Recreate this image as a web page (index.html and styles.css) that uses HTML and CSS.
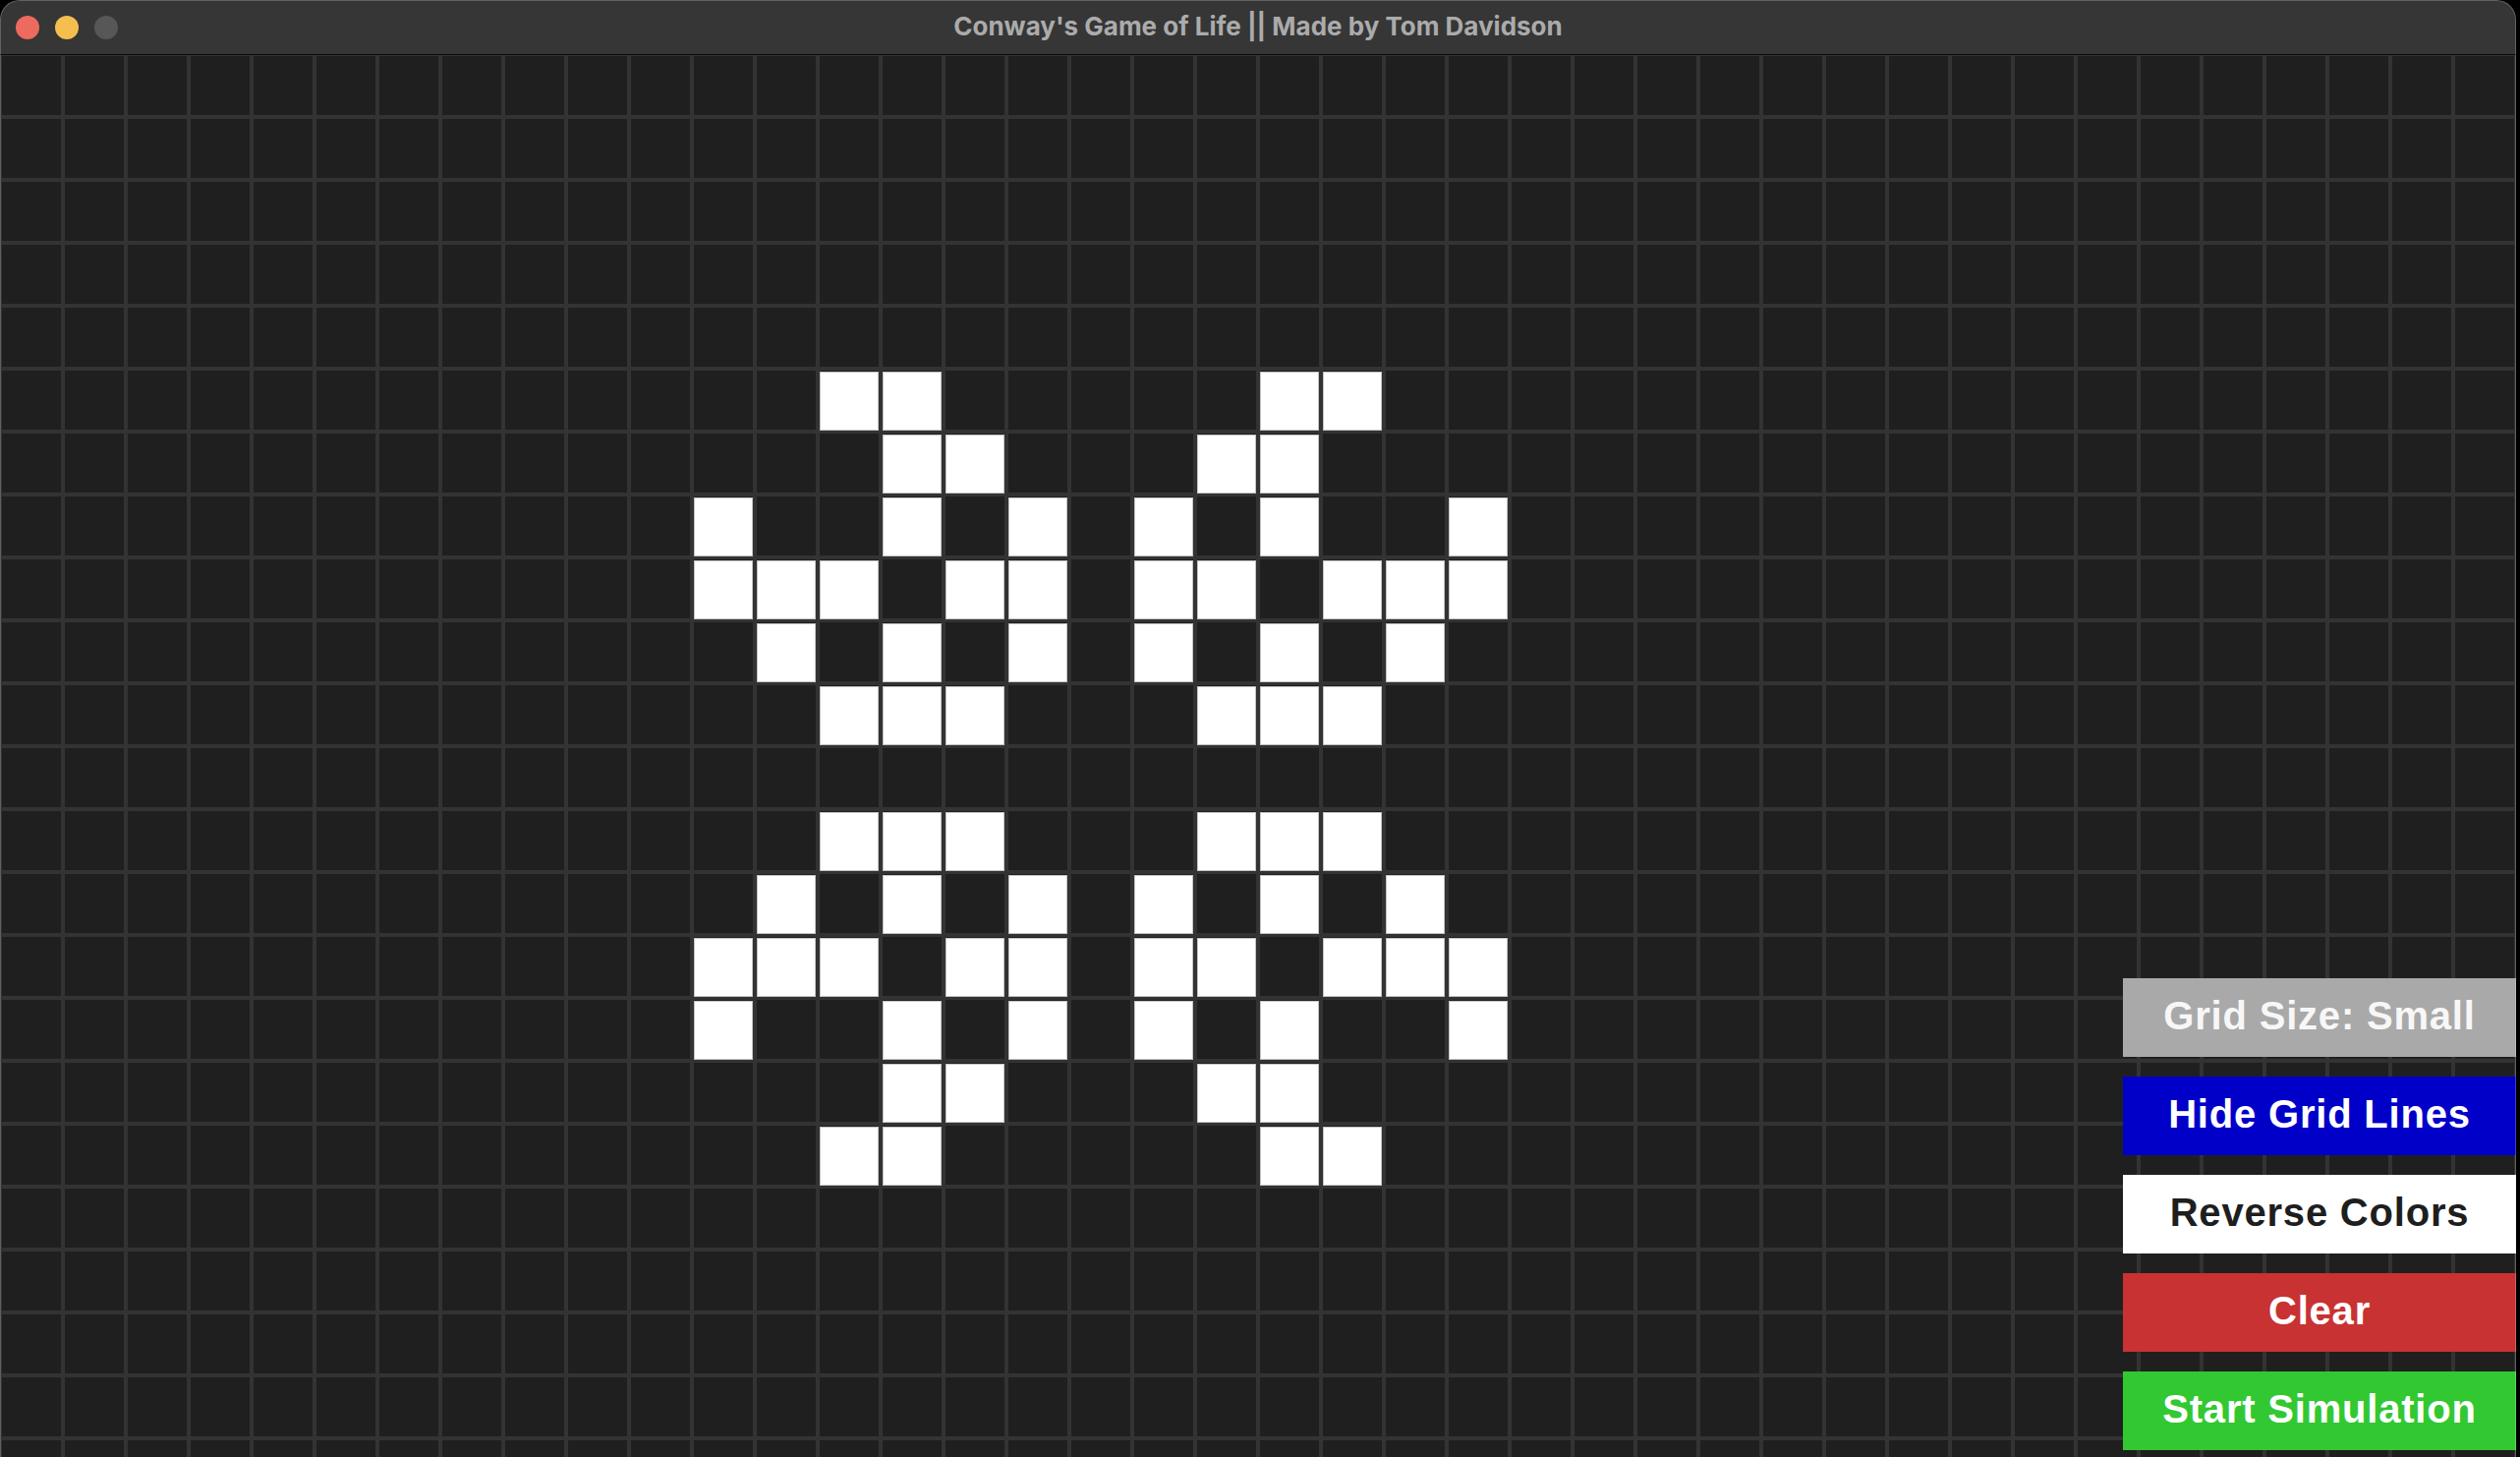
FILE: index.html
```html
<!DOCTYPE html>
<html lang="en">
<head>
<meta charset="utf-8">
<title>Conway's Game of Life</title>
<link rel="stylesheet" href="styles.css">
</head>
<body>
<div class="window">
  <header class="titlebar">
    <div class="lights">
      <span class="light close"></span>
      <span class="light minimize"></span>
      <span class="light zoom"></span>
    </div>
    <div class="title">Conway's Game of Life || Made by Tom Davidson</div>
    <div class="spacer"></div>
  </header>
  <main class="canvas">
    <div class="board">
      <div class="cell r5 c13"></div><div class="cell r5 c14"></div><div class="cell r5 c20"></div><div class="cell r5 c21"></div>
      <div class="cell r6 c14"></div><div class="cell r6 c15"></div><div class="cell r6 c19"></div><div class="cell r6 c20"></div>
      <div class="cell r7 c11"></div><div class="cell r7 c14"></div><div class="cell r7 c16"></div><div class="cell r7 c18"></div><div class="cell r7 c20"></div><div class="cell r7 c23"></div>
      <div class="cell r8 c11"></div><div class="cell r8 c12"></div><div class="cell r8 c13"></div><div class="cell r8 c15"></div><div class="cell r8 c16"></div><div class="cell r8 c18"></div><div class="cell r8 c19"></div><div class="cell r8 c21"></div><div class="cell r8 c22"></div><div class="cell r8 c23"></div>
      <div class="cell r9 c12"></div><div class="cell r9 c14"></div><div class="cell r9 c16"></div><div class="cell r9 c18"></div><div class="cell r9 c20"></div><div class="cell r9 c22"></div>
      <div class="cell r10 c13"></div><div class="cell r10 c14"></div><div class="cell r10 c15"></div><div class="cell r10 c19"></div><div class="cell r10 c20"></div><div class="cell r10 c21"></div>
      <div class="cell r12 c13"></div><div class="cell r12 c14"></div><div class="cell r12 c15"></div><div class="cell r12 c19"></div><div class="cell r12 c20"></div><div class="cell r12 c21"></div>
      <div class="cell r13 c12"></div><div class="cell r13 c14"></div><div class="cell r13 c16"></div><div class="cell r13 c18"></div><div class="cell r13 c20"></div><div class="cell r13 c22"></div>
      <div class="cell r14 c11"></div><div class="cell r14 c12"></div><div class="cell r14 c13"></div><div class="cell r14 c15"></div><div class="cell r14 c16"></div><div class="cell r14 c18"></div><div class="cell r14 c19"></div><div class="cell r14 c21"></div><div class="cell r14 c22"></div><div class="cell r14 c23"></div>
      <div class="cell r15 c11"></div><div class="cell r15 c14"></div><div class="cell r15 c16"></div><div class="cell r15 c18"></div><div class="cell r15 c20"></div><div class="cell r15 c23"></div>
      <div class="cell r16 c14"></div><div class="cell r16 c15"></div><div class="cell r16 c19"></div><div class="cell r16 c20"></div>
      <div class="cell r17 c13"></div><div class="cell r17 c14"></div><div class="cell r17 c20"></div><div class="cell r17 c21"></div>
    </div>
    <div class="controls">
      <button class="btn btn-gray">Grid Size: Small</button>
      <button class="btn btn-blue">Hide Grid Lines</button>
      <button class="btn btn-white">Reverse Colors</button>
      <button class="btn btn-red">Clear</button>
      <button class="btn btn-green">Start Simulation</button>
    </div>
  </main>
</div>
</body>
</html>
```

FILE: styles.css
```css
html, body {
  margin: 0;
  padding: 0;
  background: #000;
  height: 100%;
  overflow: hidden;
}

.window {
  position: relative;
  width: 2560px;
  height: 1482px;
  border-radius: 20px 20px 0 0;
  overflow: hidden;
  background: #1f1f1f;
}

.window::after {
  content: "";
  position: absolute;
  inset: 0;
  border: 1px solid rgba(255, 255, 255, 0.22);
  border-bottom: none;
  border-radius: 20px 20px 0 0;
  pointer-events: none;
}

.titlebar {
  height: 55px;
  background: #363636;
  border-bottom: 1px solid #0a0a0a;
  display: grid;
  grid-template-columns: 1fr auto 1fr;
  align-items: center;
}

.lights {
  display: flex;
  gap: 16px;
  padding-left: 16px;
  padding-top: 1px;
}

.light {
  width: 24px;
  height: 24px;
  border-radius: 50%;
  display: block;
}

.close { background: #ed6a5e; }
.minimize { background: #f5bf4f; }
.zoom { background: #575757; }

.title {
  font-family: Inter, "Liberation Sans", sans-serif;
  font-weight: 700;
  font-size: 26px;
  color: #ababab;
  letter-spacing: 0;
  padding-bottom: 2px;
}

.canvas {
  position: relative;
  height: 1426px;
  background-color: #1f1f1f;
  background-image:
    linear-gradient(to right, #333333 4px, transparent 4px),
    linear-gradient(to bottom, #333333 4px, transparent 4px);
  background-size: 64px 64px, 64px 64px;
  background-position: -2px 0, 0 -3px;
}

.board {
  display: grid;
  grid-template-columns: repeat(40, 64px);
  grid-template-rows: repeat(23, 64px);
}

.cell {
  margin: 2px;
  background: #ffffff;
  box-shadow: inset 0 0 0 1px #c4c4c4;
}

.r5 { grid-row: 6; }
.r6 { grid-row: 7; }
.r7 { grid-row: 8; }
.r8 { grid-row: 9; }
.r9 { grid-row: 10; }
.r10 { grid-row: 11; }
.r12 { grid-row: 13; }
.r13 { grid-row: 14; }
.r14 { grid-row: 15; }
.r15 { grid-row: 16; }
.r16 { grid-row: 17; }
.r17 { grid-row: 18; }

.c11 { grid-column: 12; }
.c12 { grid-column: 13; }
.c13 { grid-column: 14; }
.c14 { grid-column: 15; }
.c15 { grid-column: 16; }
.c16 { grid-column: 17; }
.c18 { grid-column: 19; }
.c19 { grid-column: 20; }
.c20 { grid-column: 21; }
.c21 { grid-column: 22; }
.c22 { grid-column: 23; }
.c23 { grid-column: 24; }

.controls {
  position: absolute;
  right: 0;
  bottom: 7px;
  width: 400px;
  display: flex;
  flex-direction: column;
  gap: 20px;
}

.btn {
  height: 80px;
  border: none;
  margin: 0;
  padding: 0 0 4px 0;
  font-family: "Liberation Sans", Arial, sans-serif;
  font-weight: 700;
  font-size: 40px;
  line-height: 76px;
  letter-spacing: 0.8px;
  text-align: center;
  color: #ffffff;
}

.btn-gray { background: #a9a9a9; color: #f7f7f7; }
.btn-blue { background: #0000c8; }
.btn-white { background: #ffffff; color: #1e1e1e; }
.btn-red { background: #c83232; }
.btn-green { background: #32c832; }
```
